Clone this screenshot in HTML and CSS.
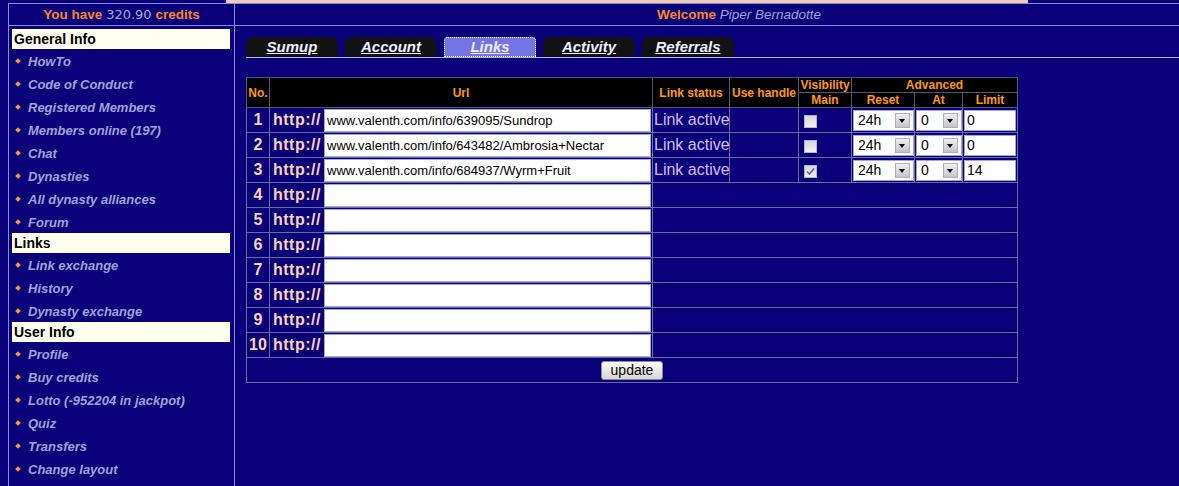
FILE: index.html
```html
<!DOCTYPE html>
<html>
	<head>
		<meta charset="UTF-8">
		<title>Links</title>
		<link rel="stylesheet" href="styles.css">
	</head>
	<body>
		<div class="top"><div class="banner"></div></div>
		<div class="frame">
			<div class="side">
				<div class="credits"><b>You have</b> <span class="amount">320.90</span> <b>credits</b></div>
				<div class="side-body">
					<div class="sec">General Info</div>
					<ul class="menu">
						<li><a href="##">HowTo</a></li>
						<li><a href="##">Code of Conduct</a></li>
						<li><a href="##">Registered Members</a></li>
						<li><a href="##">Members online (197)</a></li>
						<li><a href="##">Chat</a></li>
						<li><a href="##">Dynasties</a></li>
						<li><a href="##">All dynasty alliances</a></li>
						<li><a href="##">Forum</a></li>
					</ul>
					<div class="sec">Links</div>
					<ul class="menu">
						<li><a href="##">Link exchange</a></li>
						<li><a href="##">History</a></li>
						<li><a href="##">Dynasty exchange</a></li>
					</ul>
					<div class="sec">User Info</div>
					<ul class="menu">
						<li><a href="##">Profile</a></li>
						<li><a href="##">Buy credits</a></li>
						<li><a href="##">Lotto (-952204 in jackpot)</a></li>
						<li><a href="##">Quiz</a></li>
						<li><a href="##">Transfers</a></li>
						<li><a href="##">Change layout</a></li>
					</ul>
				</div>
			</div>
			<div class="main">
				<div class="welcome"><b>Welcome</b> <i>Piper Bernadotte</i></div>
				<div class="content">
					<div class="tabs">
						<div class="tab"><a href="##">Sumup</a></div>
						<div class="tab"><a href="##">Account</a></div>
						<div class="tab on"><a href="##">Links</a></div>
						<div class="tab"><a href="##">Activity</a></div>
						<div class="tab"><a href="##">Referrals</a></div>
					</div>
					<table class="links">
						<colgroup>
							<col style="width:23px">
							<col style="width:383px">
							<col style="width:77px">
							<col style="width:69px">
							<col style="width:53px">
							<col style="width:63px">
							<col style="width:48px">
							<col style="width:55px">
						</colgroup>
						<thead>
							<tr class="h1">
								<th rowspan="2">No.</th>
								<th rowspan="2">Url</th>
								<th rowspan="2">Link status</th>
								<th rowspan="2">Use handle</th>
								<th>Visibility</th>
								<th colspan="3">Advanced</th>
							</tr>
							<tr class="h2">
								<th>Main</th>
								<th>Reset</th>
								<th>At</th>
								<th>Limit</th>
							</tr>
						</thead>
						<tbody>
							<tr>
								<td class="no">1</td>
								<td class="url"><span class="proto">http://</span><input class="addr" type="text" value="www.valenth.com/info/639095/Sundrop"></td>
								<td class="status">Link active</td>
								<td></td>
								<td><span class="chk"></span></td>
								<td><span class="sel w-reset">24h<span class="arr"></span></span></td>
								<td><span class="sel w-at">0<span class="arr"></span></span></td>
								<td><input class="limit" type="text" value="0"></td>
							</tr>
							<tr>
								<td class="no">2</td>
								<td class="url"><span class="proto">http://</span><input class="addr" type="text" value="www.valenth.com/info/643482/Ambrosia+Nectar"></td>
								<td class="status">Link active</td>
								<td></td>
								<td><span class="chk"></span></td>
								<td><span class="sel w-reset">24h<span class="arr"></span></span></td>
								<td><span class="sel w-at">0<span class="arr"></span></span></td>
								<td><input class="limit" type="text" value="0"></td>
							</tr>
							<tr>
								<td class="no">3</td>
								<td class="url"><span class="proto">http://</span><input class="addr" type="text" value="www.valenth.com/info/684937/Wyrm+Fruit"></td>
								<td class="status">Link active</td>
								<td></td>
								<td><span class="chk"><svg width="9" height="9" viewBox="0 0 9 9"><path d="M1 4.5 L3.5 7 L8 1.5" fill="none" stroke="#6262c0" stroke-width="1.6"/></svg></span></td>
								<td><span class="sel w-reset">24h<span class="arr"></span></span></td>
								<td><span class="sel w-at">0<span class="arr"></span></span></td>
								<td><input class="limit" type="text" value="14"></td>
							</tr>
							<tr><td class="no">4</td><td class="url"><span class="proto">http://</span><input class="addr" type="text"></td><td colspan="6"></td></tr>
							<tr><td class="no">5</td><td class="url"><span class="proto">http://</span><input class="addr" type="text"></td><td colspan="6"></td></tr>
							<tr><td class="no">6</td><td class="url"><span class="proto">http://</span><input class="addr" type="text"></td><td colspan="6"></td></tr>
							<tr><td class="no">7</td><td class="url"><span class="proto">http://</span><input class="addr" type="text"></td><td colspan="6"></td></tr>
							<tr><td class="no">8</td><td class="url"><span class="proto">http://</span><input class="addr" type="text"></td><td colspan="6"></td></tr>
							<tr><td class="no">9</td><td class="url"><span class="proto">http://</span><input class="addr" type="text"></td><td colspan="6"></td></tr>
							<tr><td class="no">10</td><td class="url"><span class="proto">http://</span><input class="addr" type="text"></td><td colspan="6"></td></tr>
							<tr><td class="foot" colspan="8"><button class="update">update</button></td></tr>
						</tbody>
					</table>
				</div>
			</div>
		</div>
	</body>
</html>
```

FILE: styles.css
```css
*{
	margin: 0;
	padding: 0;
	list-style: none;
}
html,body{
	height: 100%;
	overflow: hidden;
}
body{
	background: #0a0079;
	margin-left: 8px;
	font-family: "Liberation Sans", Arial, sans-serif;
}
.top{
	height: 3px;
}
.banner{
	margin-left: 218px;
	width: 802px;
	height: 3px;
	background: #efcbb9;
}
.frame{
	display: flex;
	border-top: 1px solid #8a8ad6;
	height: calc(100% - 4px);
}
/* sidebar */
.side{
	width: 225px;
	flex: none;
	border-left: 1px solid #8a8ad6;
	border-right: 1px solid #8a8ad6;
}
.credits{
	height: 21px;
	line-height: 22px;
	text-align: center;
	border-bottom: 1px solid #8a8ad6;
	font-size: 13.5px;
	color: #f5862b;
	white-space: nowrap;
}
.amount{
	font-family: "DejaVu Sans", sans-serif;
	font-size: 13px;
	color: #a8a8d8;
}
.side-body{
	padding: 3px 4px 0 3px;
}
.sec{
	height: 20px;
	line-height: 20px;
	padding-left: 2px;
	background: #fffff0;
	color: #000;
	font-weight: bold;
	font-size: 14px;
}
.menu li{
	position: relative;
	height: 23px;
	line-height: 24px;
	padding-left: 16px;
}
.menu li::before{
	content: "";
	position: absolute;
	left: 4px;
	top: 10px;
	width: 4px;
	height: 4px;
	background: #ff9a2a;
	transform: rotate(45deg);
}
.menu a{
	color: #a2a2d4;
	font-weight: bold;
	font-style: italic;
	font-size: 13px;
	text-decoration: none;
}
/* main */
.main{
	flex: 1;
}
.welcome{
	height: 21px;
	line-height: 22px;
	padding-left: 64px;
	text-align: center;
	border-bottom: 1px solid #8a8ad6;
	font-size: 13.5px;
}
.welcome b{
	color: #f5862b;
}
.welcome i{
	color: #a2a2d4;
}
.content{
	padding: 11px 0 0 11px;
}
.tabs{
	display: flex;
	gap: 7px;
	border-bottom: 1px solid #b4b4f0;
}
.tab{
	width: 92px;
	height: 20px;
	line-height: 20px;
	text-align: center;
	background: #121212;
	border-radius: 7px 7px 0 0;
}
.tab a{
	color: #eeeeff;
	font-size: 15px;
	font-weight: bold;
	font-style: italic;
	text-decoration: underline;
}
.tab.on{
	background: #7474e4;
	outline: 1px dotted #fff;
	outline-offset: -1px;
	border-radius: 4px 4px 0 0;
}
/* links table */
.links{
	margin-top: 19px;
	width: 771px;
	table-layout: fixed;
	border-collapse: collapse;
	border: 1px solid #6c6c98;
}
.links th{
	background: #000;
	color: #ff9a00;
	font-size: 12px;
	font-weight: bold;
	text-align: center;
	border: 1px solid #55556e;
	padding: 0;
	white-space: nowrap;
	line-height: 14px;
}
.links .h1 th, .links .h2 th{
	height: 14px;
}
.links td{
	height: 24px;
	border: 1px solid #6c6c98;
	padding: 0 1px;
	white-space: nowrap;
	vertical-align: middle;
}
.links td.no{
	text-align: center;
	color: #f8d4b4;
	font-size: 16px;
	font-weight: bold;
	padding: 0;
}
.proto{
	display: inline-block;
	width: 53px;
	padding-left: 2px;
	box-sizing: border-box;
	color: #f8d4b4;
	font-size: 16px;
	font-weight: bold;
	letter-spacing: 0.5px;
	vertical-align: middle;
}
.addr{
	width: 327px;
	height: 23px;
	box-sizing: border-box;
	border: 1px solid #a4a4e4;
	padding: 0 2px;
	font-family: "Liberation Sans", Arial, sans-serif;
	font-size: 13px;
	color: #000;
	vertical-align: middle;
}
.status{
	color: #d4bef0;
	font-size: 16px;
}
.chk{
	display: inline-block;
	width: 11px;
	height: 11px;
	margin: 1px 0 0 4px;
	border: 1px solid #b4b4c4;
	background: linear-gradient(#d6d6d6, #f2f2f2);
	vertical-align: middle;
	line-height: 0;
}
.chk svg{
	margin: 1px 0 0 1px;
}
.sel{
	display: inline-flex;
	align-items: center;
	justify-content: space-between;
	height: 21px;
	box-sizing: border-box;
	padding: 0 3px 0 4px;
	background: #fff;
	border: 1px solid #a4a4e4;
	font-size: 14px;
	color: #000;
	vertical-align: middle;
}
.w-reset{
	width: 61px;
}
.w-at{
	width: 46px;
}
.arr{
	position: relative;
	width: 15px;
	height: 15px;
	box-sizing: border-box;
	border: 1px solid #b0b0b8;
	background: linear-gradient(#f0f0f0, #c4c4cc);
}
.arr::after{
	content: "";
	position: absolute;
	left: 3px;
	top: 5px;
	border-left: 3.5px solid transparent;
	border-right: 3.5px solid transparent;
	border-top: 4px solid #000;
}
.limit{
	width: 52px;
	height: 21px;
	box-sizing: border-box;
	border: 1px solid #a4a4e4;
	padding: 0 2px;
	font-family: "Liberation Sans", Arial, sans-serif;
	font-size: 14px;
	vertical-align: middle;
}
.foot{
	text-align: center;
}
.update{
	width: 62px;
	height: 19px;
	border: 1px solid #8c8c8c;
	border-radius: 3px;
	background: linear-gradient(#fcfcfc, #d6d6d6);
	font-family: "Liberation Sans", Arial, sans-serif;
	font-size: 14px;
	color: #000;
	vertical-align: middle;
}
```
